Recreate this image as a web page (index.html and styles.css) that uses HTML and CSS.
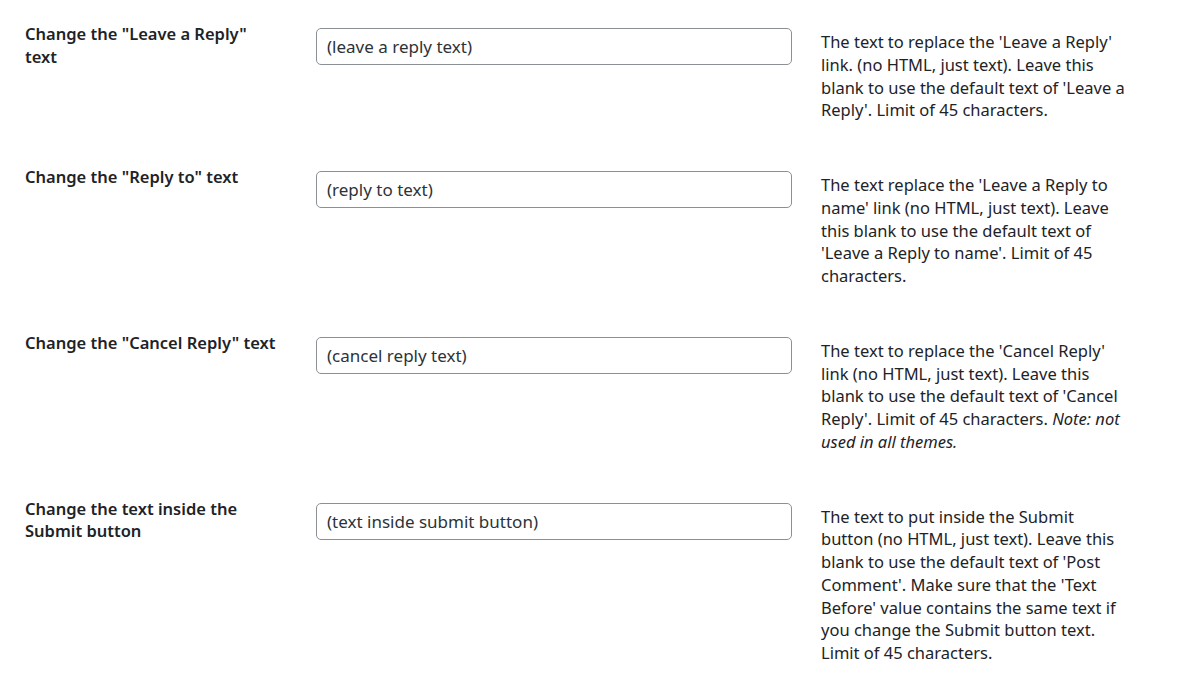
FILE: index.html
```html
<!DOCTYPE html>
<html lang="en">
<head>
<meta charset="utf-8">
<title>Comment settings</title>
<link rel="stylesheet" href="styles.css">
</head>
<body>
<div class="form-table">
  <div class="row">
    <div class="label">Change the "Leave a Reply" text</div>
    <div class="field"><input class="text-input" type="text" value="(leave a reply text)"></div>
    <div class="desc">The text to replace the 'Leave a Reply' link. (no HTML, just text). Leave this blank to use the default text of 'Leave a Reply'. Limit of 45 characters.</div>
  </div>
  <div class="row">
    <div class="label">Change the "Reply to" text</div>
    <div class="field"><input class="text-input" type="text" value="(reply to text)"></div>
    <div class="desc">The text replace the 'Leave a Reply to name' link (no HTML, just text). Leave this blank to use the default text of 'Leave a Reply to name'. Limit of 45 characters.</div>
  </div>
  <div class="row">
    <div class="label">Change the "Cancel Reply" text</div>
    <div class="field"><input class="text-input" type="text" value="(cancel reply text)"></div>
    <div class="desc">The text to replace the 'Cancel Reply' link (no HTML, just text). Leave this blank to use the default text of 'Cancel Reply'. Limit of 45 characters. <em>Note: not used in all themes.</em></div>
  </div>
  <div class="row">
    <div class="label">Change the text inside the Submit button</div>
    <div class="field"><input class="text-input" type="text" value="(text inside submit button)"></div>
    <div class="desc">The text to put inside the Submit button (no HTML, just text). Leave this blank to use the default text of 'Post Comment'. Make sure that the 'Text Before' value contains the same text if you change the Submit button text. Limit of 45 characters.</div>
  </div>
</div>
</body>
</html>
```

FILE: styles.css
```css
html, body {
  margin: 0;
  padding: 0;
  background: #ffffff;
}

body {
  font-family: "Noto Sans", "Open Sans", sans-serif;
  font-size: 16.5px;
  line-height: 22.75px;
  color: #1d2327;
}

.form-table {
  padding: 1px 0 0 25px;
}

.row {
  display: grid;
  grid-template-columns: 262px 476px 305px;
  column-gap: 29px;
  align-items: start;
  padding: 22px 0;
}

.label {
  box-sizing: border-box;
  padding-right: 10px;
  font-weight: 600;
  color: #1d2327;
}

.field {
  padding-top: 5px;
}

.text-input {
  display: block;
  box-sizing: border-box;
  width: 476px;
  height: 37px;
  margin: 0;
  padding: 0 10px;
  border: 1px solid #8c8f94;
  border-radius: 5px;
  background: #ffffff;
  font-family: inherit;
  font-size: 17px;
  color: #2c3338;
  outline: none;
}

.desc {
  padding-top: 8px;
  color: #1d2327;
}

.desc em {
  font-style: italic;
}
```
